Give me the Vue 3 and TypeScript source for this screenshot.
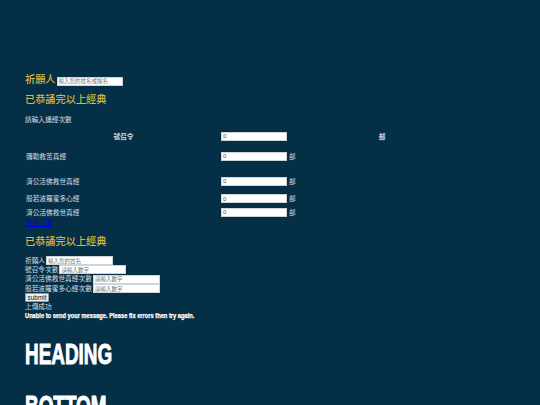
<script setup lang="ts">
const rows = [
  { name: '號召令', h: 12, head: true },
  { name: '彌勒救苦真經', h: 28 },
  { name: '濟公活佛救世真經', h: 22 },
  { name: '般若波羅蜜多心經', h: 13 },
  { name: '濟公活佛救世真經', h: 14 },
]
const formRows = [
  { label: '祈願人', ph: '輸入您的姓名' },
  { label: '號召令次數', ph: '請輸入數字' },
  { label: '濟公活佛救世真經次數', ph: '請輸入數字' },
  { label: '般若波羅蜜多心經次數', ph: '請輸入數字' },
]
</script>

<template>
  <main class="page">
    <div class="pray">
      <span class="gold">祈願人</span>
      <input class="field name" placeholder="輸入您的姓名或撞名" />
    </div>
    <h2 class="gold title">已恭誦完以上經典</h2>
    <p class="hint">請輸入誦經次數</p>
    <div class="table">
      <div v-for="(r, i) in rows" :key="i" class="row" :class="{ head: r.head }" :style="{ height: r.h + 'px' }">
        <div class="c1">{{ r.name }}</div>
        <div class="c2"><input class="num" value="0" /></div>
        <div class="c3">部</div>
      </div>
    </div>
    <a class="back" href="#">回到上層</a>
    <h2 class="gold title second">已恭誦完以上經典</h2>
    <form class="form" @submit.prevent>
      <div v-for="f in formRows" :key="f.label" class="frow">
        <label>{{ f.label }}</label>
        <input class="field small" :placeholder="f.ph" />
      </div>
      <button class="submit" type="submit">submit</button>
      <div class="done">上傳成功</div>
      <div class="err">Unable to send your message. Please fix errors then try again.</div>
    </form>
    <h1 class="big first">HEADING</h1>
    <h1 class="big last">BOTTOM</h1>
  </main>
</template>

<style scoped>
.page {
  box-sizing: border-box;
  height: 405px;
  overflow: hidden;
  padding: 73px 0 0 25px;
  background: #042f46;
  color: #d5dde2;
  font-family: "Liberation Sans", "Noto Sans CJK TC", sans-serif;
  font-size: 6.7px;
  line-height: 10px;
}
.gold { color: #d4b83e; font-size: 10.2px; font-weight: 500; }
.pray { display: flex; align-items: center; height: 14px; }
.field {
  box-sizing: border-box;
  border: 1px solid #cdd3d6;
  background: #fff;
  padding: 0 1px;
  font: 5.5px "Liberation Sans", "Noto Sans CJK TC", sans-serif;
  outline: none;
}
.field::placeholder { color: #777; }
.name { width: 66px; height: 9px; margin-left: 1px; margin-top: 2px; }
.title { margin: 6px 0 0; line-height: 14px; }
.hint { margin: 8px 0 0; line-height: 10px; }
.table { margin-top: 5px; width: 450px; }
.row { display: flex; align-items: center; }
.c1 { width: 196px; padding: 1px 0 0 1px; box-sizing: border-box; }
.c2 { width: 68px; }
.c3 { flex: 1; padding-top: 1px; }
.head .c1, .head .c3 { text-align: center; font-weight: 700; }
.num {
  display: block;
  box-sizing: border-box;
  width: 66px;
  height: 9px;
  border: 1px solid #cdd3d6;
  background: #fff;
  padding: 0 1px;
  color: #555;
  font: 6px "Liberation Sans", sans-serif;
  outline: none;
}
.back { display: block; color: #0000ee; text-decoration: underline; line-height: 8px; }
.second { margin-top: 8px; }
.form { margin-top: 7px; }
.frow { display: flex; align-items: center; height: 9.33px; }
.small { width: 67px; height: 9px; margin-left: 1px; }
.submit {
  display: block;
  box-sizing: border-box;
  width: 24px;
  height: 9px;
  padding: 0;
  border: 1px solid #999;
  border-radius: 1px;
  background: #efefef;
  color: #111;
  font: 6.5px/7px "Liberation Sans", sans-serif;
}
.done { line-height: 9px; }
.err {
  color: #fff;
  font-weight: 700;
  font-size: 6.6px;
  line-height: 8px;
  padding-top: 1px;
  white-space: nowrap;
  transform: scaleX(0.867);
  transform-origin: left center;
  -webkit-text-stroke: 0.25px #fff;
}
.big {
  color: #fff;
  font-family: "Liberation Sans", sans-serif;
  font-weight: 700;
  font-size: 30px;
  line-height: 30px;
  white-space: nowrap;
  transform: scaleX(0.63);
  transform-origin: left center;
  -webkit-text-stroke: 1px #fff;
}
.first { margin: 19px 0 0; }
.last { margin: 22px 0 0; }
</style>
